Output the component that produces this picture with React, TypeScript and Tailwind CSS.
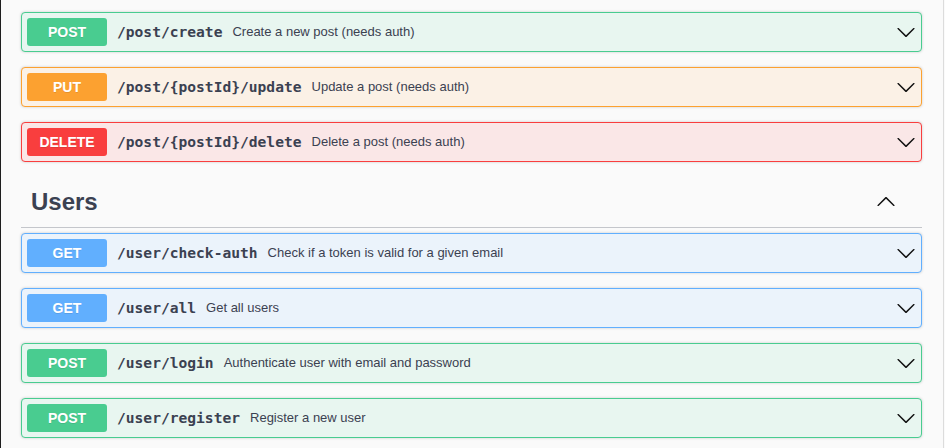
import React from 'react';

type Method = 'GET' | 'POST' | 'PUT' | 'DELETE';

interface Op {
  method: Method;
  path: string;
  summary: string;
}

const styles: Record<Method, { box: string; badge: string }> = {
  POST: { box: 'border-[#49cc90] bg-[#e8f6f0]', badge: 'bg-[#49cc90]' },
  PUT: { box: 'border-[#fca130] bg-[#fbf1e6]', badge: 'bg-[#fca130]' },
  DELETE: { box: 'border-[#f93e3e] bg-[#fae7e7]', badge: 'bg-[#f93e3e]' },
  GET: { box: 'border-[#61affe] bg-[#ebf3fb]', badge: 'bg-[#61affe]' },
};

const postOps: Op[] = [
  { method: 'POST', path: '/post/create', summary: 'Create a new post (needs auth)' },
  { method: 'PUT', path: '/post/{postId}/update', summary: 'Update a post (needs auth)' },
  { method: 'DELETE', path: '/post/{postId}/delete', summary: 'Delete a post (needs auth)' },
];

const userOps: Op[] = [
  { method: 'GET', path: '/user/check-auth', summary: 'Check if a token is valid for a given email' },
  { method: 'GET', path: '/user/all', summary: 'Get all users' },
  { method: 'POST', path: '/user/login', summary: 'Authenticate user with email and password' },
  { method: 'POST', path: '/user/register', summary: 'Register a new user' },
];

const Arrow = ({ up = false }: { up?: boolean }) => (
  <svg
    width="20"
    height="20"
    viewBox="0 0 20 20"
    className={up ? 'rotate-180' : ''}
    fill="#111"
  >
    <path d="M17.418 6.109c.272-.268.709-.268.979 0s.271.701 0 .969l-7.908 7.83c-.27.268-.707.268-.979 0l-7.908-7.83c-.27-.268-.27-.701 0-.969.271-.268.709-.268.979 0L10 13.25l7.418-7.141z" />
  </svg>
);

const OpRow: React.FC<{ op: Op }> = ({ op }) => {
  const s = styles[op.method];
  return (
    <div
      className={`flex items-center h-[40px] border rounded-[4px] px-[5px] mb-[15px] shadow-[0_0_3px_rgba(0,0,0,0.19)] ${s.box}`}
    >
      <span
        className={`w-[80px] h-[28px] flex items-center justify-center rounded-[3px] text-white text-[14px] font-bold [text-shadow:0_1px_0_rgba(0,0,0,0.1)] ${s.badge}`}
        style={{ fontFamily: '"Liberation Sans", Arial, sans-serif' }}
      >
        {op.method}
      </span>
      <span
        className="pl-[10px] pr-[10px] text-[14.6px] font-bold text-[#3b4151] whitespace-nowrap"
        style={{ fontFamily: '"DejaVu Sans Mono", "Liberation Mono", monospace' }}
      >
        {op.path}
      </span>
      <span
        className="flex-1 text-[13px] text-[#3b4151] whitespace-nowrap"
        style={{ fontFamily: '"Liberation Sans", Arial, sans-serif' }}
      >
        {op.summary}
      </span>
      <span className="w-[20px] flex items-center">
        <Arrow />
      </span>
    </div>
  );
};

export default function App() {
  return (
    <div className="w-[945px] h-[448px] overflow-hidden bg-[#fafafa] flex">
      <div className="w-[944px] h-full border-l border-l-[#1e1e1e] border-r border-r-[#dcdcdc] pl-[20px] pt-[12px]">
        <div className="w-[901px]">
          {postOps.map((op) => (
            <OpRow key={op.path} op={op} />
          ))}
          <h3
            className="h-[51px] flex items-center justify-between pl-[10px] pr-[26px] mb-[5px] border-b border-b-[#c4c6cb] text-[24px] font-bold text-[#3b4151]"
            style={{ fontFamily: '"Liberation Sans", Arial, sans-serif' }}
          >
            <span>Users</span>
            <Arrow up />
          </h3>
          {userOps.map((op) => (
            <OpRow key={op.path} op={op} />
          ))}
        </div>
      </div>
    </div>
  );
}
